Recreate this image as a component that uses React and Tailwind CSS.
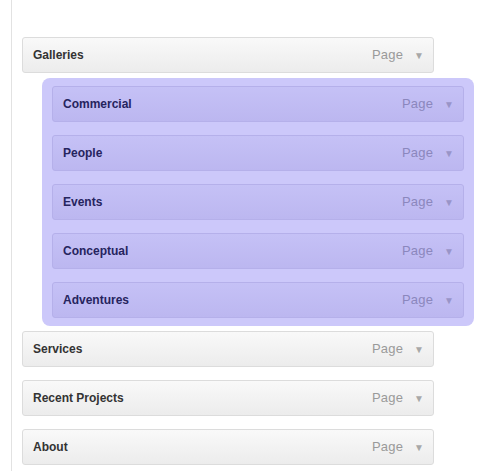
import React from "react";

function Item({ title, purple }) {
  return (
    <div
      className={
        "flex h-[36px] items-center justify-between rounded-[3px] border pl-[10px] pr-[9px] " +
        (purple
          ? "border-[#b5b0ea] bg-gradient-to-b from-[#c5c1f6] to-[#bcb7f0]"
          : "border-[#dcdcdc] bg-gradient-to-b from-[#f9f9f9] to-[#ececec]")
      }
    >
      <span
        className={
          "text-[12px] font-bold " + (purple ? "text-[#26245e]" : "text-[#333333]")
        }
      >
        {title}
      </span>
      <span className="flex items-center">
        <span
          className={
            "text-[13px] tracking-[0.2px] " + (purple ? "text-[#8b87bd]" : "text-[#9a9a9a]")
          }
        >
          Page
        </span>
        <span
          className={
            "ml-[11px] text-[10px] " + (purple ? "text-[#9994c8]" : "text-[#a8a8a8]")
          }
        >
          ▼
        </span>
      </span>
    </div>
  );
}

export default function App() {
  return (
    <div
      className="flex h-[471px] w-[503px] bg-white"
      style={{ fontFamily: '"Liberation Sans", Arial, sans-serif' }}
    >
      <div className="ml-[11px] w-px bg-[#e2e2e2]" />
      <div className="ml-[10px] flex flex-col pt-[37px]">
        <div className="w-[412px]">
          <Item title="Galleries" />
        </div>
        <div className="ml-[20px] mt-[5px] flex w-[432px] flex-col gap-[13px] rounded-[8px] bg-[#ccc8fa] px-[10px] py-[8px]">
          <Item title="Commercial" purple />
          <Item title="People" purple />
          <Item title="Events" purple />
          <Item title="Conceptual" purple />
          <Item title="Adventures" purple />
        </div>
        <div className="mt-[5px] flex w-[412px] flex-col gap-[13px]">
          <Item title="Services" />
          <Item title="Recent Projects" />
          <Item title="About" />
        </div>
      </div>
    </div>
  );
}
